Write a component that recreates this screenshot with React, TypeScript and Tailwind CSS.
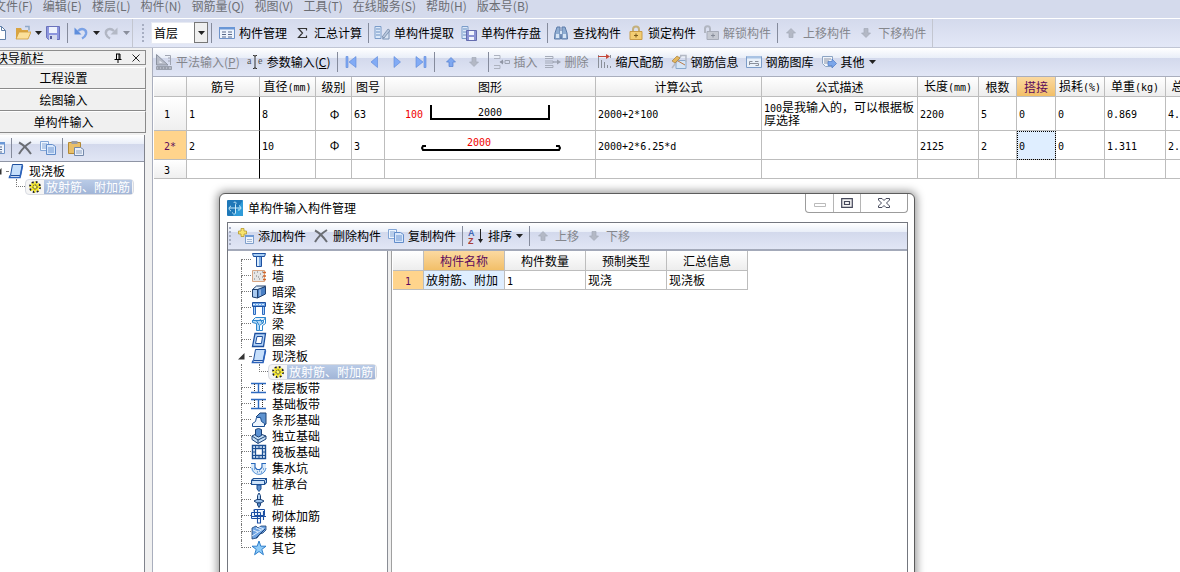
import type { ReactNode } from 'react';
import clsx from 'clsx';

/* ─── Types ─────────────────────────────────────────────────────────────── */

interface RebarRow {
  no: string;
  name: string;
  diameter: string;
  grade: string;
  shape: string;
  drawing: ReactNode;
  formula: string;
  remark: ReactNode;
  length: string;
  count: string;
  lap: string;
  loss: string;
  unitWeight: string;
  totalWeight: string;
  active?: boolean;
  height: string;
}

/* ─── Icons ─────────────────────────────────────────────────────────────── */

function Icon({ children }: { children?: ReactNode }) {
  return (
    <svg viewBox="0 0 16 16" className="w-4 h-4 shrink-0" fill="none" aria-hidden="true">
      {children}
    </svg>
  );
}

function Caret({ light }: { light?: boolean }) {
  return (
    <svg viewBox="0 0 7 4" className={clsx('w-[7px] h-1 shrink-0', light ? 'text-[#8a8f9c]' : 'text-[#222]')} aria-hidden="true">
      <path d="M0 0h7L3.5 4z" fill="currentColor" />
    </svg>
  );
}

const NewIcon = () => (
  <Icon>
    <path d="M2.5 1.5h7l4 4v9h-11z" fill="#fff" stroke="#5f7fa8" />
    <path d="M9.5 1.5v4h4" stroke="#5f7fa8" />
  </Icon>
);

const OpenIcon = () => (
  <Icon>
    <path d="M1 3h5l1 2h6v9H1z" fill="#d9a441" />
    <path d="M10 1.5h4v4" stroke="#8fa9c9" strokeWidth="1.5" />
    <path d="M1 14L4 7h12l-3 7z" fill="#fbe09a" stroke="#d09c3a" strokeWidth=".8" />
  </Icon>
);

const SaveIcon = () => (
  <Icon>
    <path d="M1.5 1.5h13v13h-11l-2-2z" fill="#8c95de" stroke="#6a72bb" />
    <path d="M4 2h8v6H4z" fill="#eef2fd" />
    <path d="M4 10h8v5H4z" fill="#d3d8ee" />
    <path d="M5 11h2v3H5z" fill="#555d9c" />
  </Icon>
);

const UndoIcon = ({ light }: { light?: boolean }) => (
  <Icon>
    <g transform={light ? 'translate(16 0) scale(-1 1)' : undefined}>
      <path d="M5 6c4-4 9-1.500 8 3-.5 2-2 3.500-4 4.500" stroke={light ? '#b1b6c3' : '#7ba2e6'} strokeWidth="2.4" />
      <path d="M1.5 2.500v7h7z" fill={light ? '#b4b9c6' : '#5f8edc'} />
    </g>
  </Icon>
);

const FormIcon = () => (
  <Icon>
    <path d="M.5 2.5h15v11H.5z" fill="#eef4fd" stroke="#6e93c9" />
    <path d="M0 2h16v2.500H0z" fill="#6a97d6" />
    <path d="M3 7h4M3 9.500h4M3 12h4M9 7h4M9 9.500h4M9 12h4" stroke="#58698a" />
  </Icon>
);

const SigmaIcon = () => (
  <Icon>
    <path d="M12.5 5.500v-2H4.500l4 4.500-4 4.500h8v-2" stroke="#333" strokeWidth="1.2" />
  </Icon>
);

const ExtractIcon = () => (
  <Icon>
    <path d="M1 1.500h6v12H1z" fill="#dbe8f8" stroke="#7b9cc9" />
    <path d="M2 4h4M2 7h4M2 10h4" stroke="#6b8fc2" />
    <path d="M8.500 14L15 5v9z" fill="#d9e4f4" stroke="#7a93b5" />
    <path d="M8 12l6-8 2 1.500-6 7.500z" fill="#b9c8df" stroke="#69809f" strokeWidth=".7" />
  </Icon>
);

const StoreIcon = () => (
  <Icon>
    <path d="M1 1.500h6v12H1z" fill="#dbe8f8" stroke="#7b9cc9" />
    <path d="M2 4h4M2 7h4M2 10h4" stroke="#6b8fc2" />
    <path d="M5.500 5.500h10v10h-10z" fill="#8b93d4" stroke="#646cae" />
    <path d="M8 6h5v4H8zM8 12h5v3H8z" fill="#f1f4fd" />
  </Icon>
);

const FindIcon = () => (
  <Icon>
    <path d="M4 2h3v3l.5 9h-6l.5-6zM9 2h3l2 6 .5 6h-6L9 5z" fill="#8fadd2" stroke="#5c7ba8" />
    <path d="M3 9h3v4H3zM10 9h3v4h-3zM7 6h2v3H7z" fill="#d6e4f5" />
  </Icon>
);

const LockIcon = ({ light }: { light?: boolean }) => (
  <Icon>
    <path
      d={light ? 'M2 8V4a2.500 2.500 0 0 1 5-.5V7' : 'M5 7V4.500a3 3 0 0 1 6 0V7'}
      stroke={light ? '#b1b6c1' : '#c4b07c'}
      strokeWidth="2"
    />
    <path
      d={light ? 'M4 6.500h11.500v8H4z' : 'M2 6.500h12v8H2z'}
      fill={light ? '#c5c9d2' : '#f3cd72'}
      stroke={light ? '#a7acb8' : '#c99c48'}
    />
    <path
      d={light ? 'M8 10.500h4M10 8.500v4' : 'M6 10.500h4M8 8.500v4'}
      stroke={light ? '#858b98' : '#7b5a1c'}
    />
  </Icon>
);

const ArrowIcon = ({ down, blue }: { down?: boolean; blue?: boolean }) => (
  <Icon>
    <path
      d={down ? 'M8 12.500L3.500 8H6V3.500h4V8h2.500z' : 'M8 3.500L3.500 8H6v4.500h4V8h2.500z'}
      fill={blue ? '#7ea7f0' : '#b3b8c5'}
      stroke={blue ? '#5580d0' : '#a4aab8'}
      strokeWidth=".7"
    />
  </Icon>
);

const NavIcon = ({ d }: { d: string }) => (
  <Icon>
    <path d={d} fill="#82abf5" stroke="#5a86d8" strokeWidth=".6" />
  </Icon>
);

const RulerIcon = () => (
  <Icon>
    <path d="M.5.5L12 11H.5z" fill="#b7bcc8" stroke="#8c93a1" />
    <path d="M3.500 6.500v2.500h3z" fill="#e6e9f3" />
    <path d="M.5 12.500h15v3H.5z" fill="#b5bac6" stroke="#9aa0ad" />
    <path d="M3 13v2M6 13v2M9 13v2M12 13v2" stroke="#7e8492" />
    <path d="M9 1.500h5.500V11M12 4h2M12 7h2" stroke="#a0a5b2" />
  </Icon>
);

const ParamIcon = () => (
  <svg viewBox="0 0 16 16" className="w-4 h-4 shrink-0" aria-hidden="true">
    <text x="0" y="10" fontSize="10" fill="#555" fontFamily="Liberation Serif, serif">a</text>
    <text x="11" y="10" fontSize="10" fill="#555" fontFamily="Liberation Serif, serif">e</text>
    <path d="M6 1.500h1.500l.5 1 .5-1H10M8 2v12M6 14.500h1.500l.5-1 .5 1H10" stroke="#333" fill="none" />
  </svg>
);

const InsertIcon = () => (
  <Icon>
    <path d="M0 1.500h6v3H0M0 11.500h6v3H0M6 8h4" stroke="#adb2bf" />
    <path d="M5.500 8l3.500-2.500v5z" fill="#9096a5" />
    <path d="M11 6.500h4.500v3H11z" stroke="#9da3b1" />
  </Icon>
);

const RemoveRowIcon = () => (
  <Icon>
    <path d="M0 2.500h8v2H0M0 7h8v2H0M0 11.500h8v2H0" stroke="#a5abb9" />
    <path d="M8 8h6" stroke="#8d93a2" />
    <path d="M16 8l-4-2.500v5z" fill="#9ba1af" />
  </Icon>
);

const ScaleIcon = () => (
  <Icon>
    <path d="M2.500 1v13M5.500 6v8M8.500 8v6M11.500 11v3M14.500 1v3M14.500 12v2" stroke="#8a8f99" />
    <path d="M2 2.500h9" stroke="#c4493b" />
    <path d="M10 0l4 2.500L10 5z" fill="#c4493b" />
  </Icon>
);

const InfoIcon = () => (
  <Icon>
    <path d="M5 6.500h10v8H5z" fill="#d5e5f7" stroke="#8aa9cc" />
    <path d="M1 14l9-12M9 1.500h6V8" stroke="#b3b9c5" strokeWidth="1.5" />
    <path d="M1 7l5-5 3 2-5 5z" fill="#e5b75d" stroke="#9b7434" strokeWidth=".6" />
    <path d="M7 7l7 4" stroke="#bb7a49" />
  </Icon>
);

const LibraryIcon = () => (
  <Icon>
    <path d="M.5 2.500h15v11H.5z" fill="#eaf1fa" stroke="#7c9cc8" />
    <path d="M1 2h14v2.500H1z" fill="#a9c3e4" />
    <path d="M3.500 11V7.500h3M3.500 9.500h9v2h-3M9 7.500h3.500" stroke="#8a909c" />
  </Icon>
);

const OtherIcon = () => (
  <Icon>
    <path d="M1.500 2.500h10v10h-7l-3-3z" fill="#f1f5fb" stroke="#8ca4c3" />
    <path d="M3 5h7M3 7h5M3 9h4" stroke="#8a93a5" />
    <path d="M7 7.500h4V5l4.500 4.500L11 14v-2.500H7z" fill="#7ba6ea" stroke="#4c79c4" strokeWidth=".7" />
  </Icon>
);

const CrossIcon = () => (
  <Icon>
    <path d="M2 2.500c4 2 8.500 6.500 12 11.500M14 2C9 5 5 9 2 14" stroke="#6a6d73" strokeWidth="2" />
  </Icon>
);

const CopyIcon = () => (
  <Icon>
    <path d="M.5 1.500h8v9h-8z" fill="#eef5fe" stroke="#83a6d6" />
    <path d="M2 4h5M2 6h5M2 8h5" stroke="#83a6d6" />
    <path d="M6.500 4.500h6l3 2v8h-9z" fill="#d8e7fb" stroke="#628dca" />
    <path d="M8 8h6M8 10h6M8 12h6" stroke="#6c95d0" />
  </Icon>
);

const PasteIcon = () => (
  <Icon>
    <path d="M.5 2.500h12v11H.5z" fill="#e9bf68" stroke="#b28936" />
    <path d="M3.500 1h6v3h-6z" fill="#9a9da5" />
    <path d="M6.500 7.500h6l3 2v6h-9z" fill="#eaf0fa" stroke="#7489aa" />
    <path d="M8 11h6M8 13h6" stroke="#8ea2c1" />
  </Icon>
);

const AddIcon = () => (
  <Icon>
    <path d="M7.500 7.500h8v8h-8z" fill="#eef4fc" stroke="#7f9fcb" />
    <path d="M7 7h9v2H7z" fill="#6f9ad6" />
    <path d="M9 11.500h5M9 13.500h5" stroke="#a3b6d4" />
    <path d="M3 .5h3V3h2.500v3H6v2.500H3V6H.5V3H3z" fill="#f7e36f" stroke="#b89a29" strokeWidth=".8" />
  </Icon>
);

const SortIcon = () => (
  <svg viewBox="0 0 16 16" className="w-4 h-4 shrink-0" aria-hidden="true">
    <text x="0" y="8" fontSize="9" fontWeight="bold" fill="#3f66b5" fontFamily="Liberation Sans, sans-serif">A</text>
    <text x="0" y="16" fontSize="9" fontWeight="bold" fill="#a93e3a" fontFamily="Liberation Sans, sans-serif">Z</text>
    <path d="M12.500 1v12" stroke="#222" />
    <path d="M10 11h5l-2.500 4z" fill="#222" />
  </svg>
);

/* Component-type icons used by the trees */

const B = '#1d4f9e';
const L = '#a9d0f7';

const SlabIcon = () => (
  <Icon>
    <path d="M4.500 1.500h10l-2 11h-10z" fill="#c6dffb" stroke={B} />
    <path d="M2 12.500l-.5 2H12l2.500-12" stroke="#2b62bb" strokeWidth="1.6" />
  </Icon>
);

const SunIcon = () => (
  <Icon>
    <circle cx="8" cy="8" r="5" stroke="#222" strokeWidth="2" strokeDasharray="2 1.93" />
    <path d="M8 2.500v11M2.500 8h11M4.200 4.200l7.600 7.600M11.800 4.200l-7.600 7.600" stroke="#f6e71c" strokeWidth="1.5" />
    <circle cx="8" cy="8" r="3.500" fill="#f6e71c" />
    <circle cx="8" cy="8" r="2" fill="#fff86b" stroke="#333" strokeDasharray="1.500 .6" />
  </Icon>
);

const ColumnIcon = () => (
  <Icon>
    <path d="M1.500 1.500h13l-1 3h-11z" fill={L} stroke={B} />
    <path d="M5.500 4.500h5v10h-5z" fill="#d9ecfd" stroke={B} />
    <path d="M9 5v9" stroke="#5e97dd" strokeWidth="1.5" />
  </Icon>
);

const WallIcon = () => (
  <Icon>
    <path d="M1.500 2.500h12v11h-12z" fill="#e6e6e6" stroke="#d9a683" />
    <path d="M3 5h1M6 4h1M9 6h1M5 8h1M11 9h1M3 11h1M8 11h1M11 4h1M7 9h1" stroke="#777" />
    <path d="M12 4.500h3M12 8h3M12 11.500h3" stroke="#d2662b" strokeWidth="1.5" />
  </Icon>
);

const HiddenBeamIcon = () => (
  <Icon>
    <path d="M1.500 5.500l4-3.500h9l-5 3.500z" fill="#dcecfb" stroke="#20406f" />
    <path d="M1.500 5.500h5V14l-5-1z" fill="#a9c9ef" stroke="#20406f" />
    <path d="M6.500 5.500l8-3v7.500l-8 4z" fill="#4a7fc4" stroke="#20406f" />
    <path d="M9 5.500V12" stroke="#cfe2f8" />
  </Icon>
);

const CouplingBeamIcon = () => (
  <Icon>
    <path d="M1.500 2.500h13v4h-13z" fill="#6aa2e4" stroke={B} />
    <path d="M2 4.500h12" stroke="#dbeafb" strokeDasharray="2 1" />
    <path d="M2.500 7v7.500h2V7M11.500 7v7.500h2V7" fill={L} stroke="#2d6ac0" />
  </Icon>
);

const BeamIcon = () => (
  <Icon>
    <path d="M1.500 4.500l3-3h10l-2 3z" fill="#e4f1fd" stroke="#2c85cc" />
    <path d="M1.500 4.500h11v2l-4 3v5h-3v-7l-4-1z" fill="#b5daf6" stroke="#2c85cc" />
    <path d="M14.500 1.500v6l-3 2v5h-3M5 4l3 5M9 3l3 5" stroke="#2c85cc" />
  </Icon>
);

const RingBeamIcon = () => (
  <Icon>
    <path d="M4 1.500h10.500l-2 13h-11z" fill="#b4d4f8" stroke={B} strokeWidth="1.3" />
    <path d="M6 4.500h5.500l-1 7h-6z" fill="#fff" stroke={B} />
  </Icon>
);

const StripIcon = () => (
  <Icon>
    <path d="M0 3.500h15M0 12.500h15M7.500 4v8" stroke="#2d6ac0" strokeWidth="1.4" />
    <path d="M3.500 4v8M11.500 4v8" stroke="#333" strokeDasharray="1 1" />
  </Icon>
);

const StripFootingIcon = () => (
  <Icon>
    <path d="M5 5l4-4h6v11l-3 2" fill="#5f93cf" stroke="#1c4277" />
    <path d="M1.500 14.500v-3l3-2 1-4h4l1 4 3 2v3z" fill="#eef6fe" stroke="#1c4f93" />
  </Icon>
);

const PadFootingIcon = () => (
  <Icon>
    <path d="M1 8l6-3 8 3v3l-8 4.500-6-4z" fill="#c5dff6" stroke="#1c4277" />
    <path d="M1 8l6 4 8-4M7 12v3" stroke="#1c4277" />
    <path d="M4.500 1.500l3-1 3 1v6l-3 1.500-3-1.500z" fill="#5a90d2" stroke="#1c4277" />
  </Icon>
);

const RaftIcon = () => (
  <Icon>
    <path d="M1.500 1.500h13v13h-13z" fill="#dcebfa" stroke="#1c4f93" strokeWidth="1.4" />
    <path d="M4.500 4.500h7v7h-7z" fill="#fff" stroke="#1c4f93" strokeWidth="1.3" />
    <path d="M4.500 2v2M8 2v2M11.500 2v2M4.500 12v2M8 12v2M11.500 12v2M2 4.500h2M2 8h2M2 11.500h2M12 4.500h2M12 8h2M12 11.500h2" stroke="#1c4f93" />
  </Icon>
);

const PitIcon = () => (
  <Icon>
    <path d="M0 3.500h4v4l2 2h4l2-2v-4h3V9c0 7-14 7-15 0z" fill="#d9eafa" />
    <path d="M0 3.500h4v4l2 2h3l2-2v-4h4" stroke="#2968bb" strokeWidth="1.2" />
    <path d="M1 8c1 8 12 9 14 0" stroke="#4a8ad3" />
    <path d="M3 9h1M6 12h1M10 12h1M12 9h1M8 11h1" stroke="#2968bb" />
  </Icon>
);

const PileCapIcon = () => (
  <Icon>
    <path d="M.5 4.500l2-2h13v4l-2 2H.5z" fill="#cfe4fa" stroke="#1c4f93" strokeWidth="1.2" />
    <path d="M.5 4.500h13l2-2M13.500 5v3" stroke="#1c4f93" />
    <path d="M6 9h4v4l-2 2.500L6 13z" fill="#5a8fcd" stroke="#1c4f93" />
  </Icon>
);

const PileIcon = () => (
  <Icon>
    <path d="M6.500 3.500L8 1l1.500 2.500V8h-3z" fill="#b3d2f4" stroke="#1c4277" />
    <path d="M3 9l3-1.500h4L13 9l-3 2H6z" fill="#9cc3ed" stroke="#1c4277" />
    <path d="M6.500 11h3v2L8 15.500 6.500 13z" fill="#5a8fcd" stroke="#1c4277" />
  </Icon>
);

const MasonryIcon = () => (
  <Icon>
    <path d="M3.500 1.500h10v6h-10zM.5 4.500h9v6h-9z" fill="#e4f0fc" fillOpacity=".6" stroke="#1c4fa3" />
    <path d="M6.500 2v13h3V6M0 8.500h15M12.500 3v9M3 1.500v2" stroke="#1c4fa3" strokeWidth="1.1" />
  </Icon>
);

const StairIcon = () => (
  <Icon>
    <path d="M1 7V4l4-2 2 2 3-2h5v4l-3 3-3 1-3 4-5 1v-3z" fill="#6ea3e2" stroke="#1c4277" strokeWidth=".8" />
    <path d="M2 6l5 2M5 4l5 2M8 3l5 2M1 12l11-7" stroke="#dcebfb" />
    <path d="M5 14l9-9" stroke="#1c4277" />
  </Icon>
);

const StarIcon = () => (
  <Icon>
    <path d="M8 1l1.800 5.200H15l-4.200 3.200 1.600 5.300L8 11.500l-4.400 3.200 1.600-5.300L1 6.200h5.200z" fill="#8ecbf8" stroke="#2f7fcb" />
  </Icon>
);

/* ─── Small building blocks ─────────────────────────────────────────────── */

/* Half-width characters take exactly half the width of a Chinese one */
function Half({ children }: { children: ReactNode }) {
  return (
    <span className="font-['DejaVu_Sans_Mono',monospace] text-[10px] leading-none whitespace-pre">{children}</span>
  );
}

function Sep() {
  return <span className="w-px h-5 mx-0.5 bg-[#858b9c] shrink-0" />;
}

function Grip() {
  return (
    <span className="flex flex-col gap-0.5 w-[3px] shrink-0">
      {[0, 1, 2, 3, 4].map(n => (
        <span key={n} className="w-0.5 h-0.5 bg-[#a7aec2]" />
      ))}
    </span>
  );
}

function ToolButton({
  icon, children, label, disabled, caret,
}: {
  icon: ReactNode;
  children?: ReactNode;
  label?: string;
  disabled?: boolean;
  caret?: boolean;
}) {
  return (
    <button
      type="button"
      aria-label={label}
      disabled={disabled}
      className={clsx(
        'flex items-center gap-1 pl-[3px] h-6 shrink-0 whitespace-nowrap',
        caret && !children ? 'pr-0' : 'pr-1',
        disabled ? 'text-[#85878d]' : 'text-black'
      )}
    >
      {icon}
      {children && <span>{children}</span>}
      {caret && <Caret light={disabled} />}
    </button>
  );
}

/* ─── Tree ──────────────────────────────────────────────────────────────── */

interface TreeNode {
  label: string;
  icon: ReactNode;
  child?: string;
}

const COMPONENT_TREE: TreeNode[] = [
  { label: '柱',       icon: <ColumnIcon /> },
  { label: '墙',       icon: <WallIcon /> },
  { label: '暗梁',     icon: <HiddenBeamIcon /> },
  { label: '连梁',     icon: <CouplingBeamIcon /> },
  { label: '梁',       icon: <BeamIcon /> },
  { label: '圈梁',     icon: <RingBeamIcon /> },
  { label: '现浇板',   icon: <SlabIcon />, child: '放射筋、附加筋' },
  { label: '楼层板带', icon: <StripIcon /> },
  { label: '基础板带', icon: <StripIcon /> },
  { label: '条形基础', icon: <StripFootingIcon /> },
  { label: '独立基础', icon: <PadFootingIcon /> },
  { label: '筏板基础', icon: <RaftIcon /> },
  { label: '集水坑',   icon: <PitIcon /> },
  { label: '桩承台',   icon: <PileCapIcon /> },
  { label: '桩',       icon: <PileIcon /> },
  { label: '砌体加筋', icon: <MasonryIcon /> },
  { label: '楼梯',     icon: <StairIcon /> },
  { label: '其它',     icon: <StarIcon /> },
];

function Tree({ nodes }: { nodes: TreeNode[] }) {
  return (
    <ul className="text-xs leading-4">
      {nodes.map((node, i) => {
        const first = i === 0;
        const last = i === nodes.length - 1;
        return (
          <li key={node.label}>
            <div className="flex items-center h-4">
              {node.child ? (
                <span className="flex items-center w-[13px] h-4 -ml-[3px] shrink-0">
                  <svg viewBox="0 0 7 7" className="w-[7px] h-[7px]" aria-hidden="true">
                    <path d="M6.500 0v6.500H0z" fill="#333" />
                  </svg>
                  <span className="ml-1 flex-1 border-b border-dotted border-[#777]" />
                </span>
              ) : (
                <span className="flex flex-col w-2.5 h-4 shrink-0">
                  <span className={clsx('h-2 border-b border-dotted border-[#777]', !first && 'border-l')} />
                  <span className={clsx('h-2 border-dotted border-[#777]', !last && 'border-l')} />
                </span>
              )}
              {node.icon}
              <button type="button" className="ml-[5px] whitespace-nowrap">{node.label}</button>
            </div>

            {node.child && (
              <div className="flex items-center h-4">
                <span className={clsx('w-[18px] h-4 shrink-0 border-dotted border-[#777]', !last && 'border-l')} />
                <span className="w-[9px] h-2 self-start shrink-0 border-l border-b border-dotted border-[#777]" />
                <button
                  type="button"
                  className="flex items-center h-4 px-px bg-[#f5f5f5] border border-[#d8dbe2] rounded-sm whitespace-nowrap"
                >
                  <SunIcon />
                  <span className="ml-px px-0.5 h-[14px] leading-[14px] text-white bg-linear-to-b from-[#b9cbe7] to-[#a1b5d7]">
                    {node.child}
                  </span>
                </button>
              </div>
            )}
          </li>
        );
      })}
    </ul>
  );
}

/* ─── Menu and toolbars ─────────────────────────────────────────────────── */

const MENUS = ['文件(F)', '编辑(E)', '楼层(L)', '构件(N)', '钢筋量(Q)', '视图(V)', '工具(T)', '在线服务(S)', '帮助(H)', '版本号(B)'];

function MenuBar() {
  return (
    <nav className="flex items-start gap-[10px] h-[18px] pl-3 bg-[#d4daec] text-[#6c6e74]">
      {MENUS.map(m => (
        <button key={m} type="button" className="leading-3 whitespace-nowrap">{m}</button>
      ))}
    </nav>
  );
}

function MainToolbar() {
  return (
    <div className="flex h-[30px] bg-linear-to-b from-[#d4daec] to-[#e3e8f7] border-t border-b border-t-white border-b-[#c0c5d4]">
      <div className="flex items-center pl-[7px] pr-0.5 border-r border-[#c3c6d0]">
        <ToolButton icon={<NewIcon />} label="新建" />
        <ToolButton icon={<OpenIcon />} label="打开" caret />
        <ToolButton icon={<SaveIcon />} label="保存" />
        <Sep />
        <ToolButton icon={<UndoIcon />} label="撤销" caret />
        <ToolButton icon={<UndoIcon light />} label="恢复" caret disabled />
      </div>

      <div className="flex items-center pl-[9px] pr-0.5 border-r border-[#c3c6d0]">
        <Grip />
        <div className="relative ml-1.5 mr-px">
          <select
            aria-label="楼层"
            className="appearance-none w-[57px] h-[22px] pl-0.5 text-xs bg-white border border-[#e7eaf3] text-black rounded-none"
          >
            <option>首层</option>
          </select>
          <span className="absolute right-0 top-0 w-[14px] h-[21px] flex items-center justify-center bg-[#efefef] border border-[#777] pointer-events-none">
            <Caret />
          </span>
        </div>
        <Sep />
        <span className="w-0.5 shrink-0" />
        <ToolButton icon={<FormIcon />}>构件管理</ToolButton>
        <ToolButton icon={<SigmaIcon />}>汇总计算</ToolButton>
        <Sep />
        <ToolButton icon={<ExtractIcon />}>单构件提取</ToolButton>
        <ToolButton icon={<StoreIcon />}>单构件存盘</ToolButton>
        <Sep />
        <ToolButton icon={<FindIcon />}>查找构件</ToolButton>
        <ToolButton icon={<LockIcon />}>锁定构件</ToolButton>
        <ToolButton icon={<LockIcon light />} disabled>解锁构件</ToolButton>
        <Sep />
        <ToolButton icon={<ArrowIcon />} disabled>上移构件</ToolButton>
        <ToolButton icon={<ArrowIcon down />} disabled>下移构件</ToolButton>
      </div>
    </div>
  );
}

function GridToolbar() {
  return (
    <div className="flex items-center h-[29px] border-b border-[#a9aebd] bg-[linear-gradient(to_bottom,#ffffff_0%,#e9eef8_35%,#d3d9ec_36%,#e1e6f5_100%)]">
      <ToolButton icon={<RulerIcon />} disabled>平法输入(<u>P</u>)</ToolButton>
      <ToolButton icon={<ParamIcon />}>参数输入(<u>C</u>)</ToolButton>
      <Sep />
      <ToolButton icon={<NavIcon d="M3 2.500h2v11H3zM13 2.500v11L6 8z" />} label="首行" />
      <ToolButton icon={<NavIcon d="M11.500 2.500v11L5 8z" />} label="上一行" />
      <ToolButton icon={<NavIcon d="M5 2.500v11L11.500 8z" />} label="下一行" />
      <ToolButton icon={<NavIcon d="M12 2.500h2v11h-2zM4 2.500v11L11 8z" />} label="末行" />
      <Sep />
      <span className="w-[3px] shrink-0" />
      <ToolButton icon={<ArrowIcon blue />} label="上移" />
      <ToolButton icon={<ArrowIcon down />} label="下移" disabled />
      <Sep />
      <ToolButton icon={<InsertIcon />} disabled>插入</ToolButton>
      <ToolButton icon={<RemoveRowIcon />} disabled>删除</ToolButton>
      <ToolButton icon={<ScaleIcon />}>缩尺配筋</ToolButton>
      <ToolButton icon={<InfoIcon />}>钢筋信息</ToolButton>
      <ToolButton icon={<LibraryIcon />}>钢筋图库</ToolButton>
      <ToolButton icon={<OtherIcon />} caret>其他</ToolButton>
    </div>
  );
}

/* ─── Rebar grid ────────────────────────────────────────────────────────── */

const ROWS: RebarRow[] = [
  {
    no: '1 ', name: '1', diameter: '8', grade: 'Φ', shape: '63',
    drawing: (
      <svg viewBox="0 0 210 33" className="w-[210px] h-[33px] font-['DejaVu_Sans_Mono',monospace] text-[10px]">
        <path d="M46 8v14h118V8" fill="none" stroke="#000" strokeWidth="2" />
        <text x="20" y="21" fill="#f00000">100</text>
        <text x="93" y="19" fill="#000">2000</text>
      </svg>
    ),
    formula: '2000+2*100',
    remark: <><Half>100</Half>是我输入的，可以根据板厚选择</>,
    length: '2200', count: '5', lap: '0', loss: '0', unitWeight: '0.869', totalWeight: '4.345',
    height: 'h-[34px]',
  },
  {
    no: '2*', name: '2', diameter: '10', grade: 'Φ', shape: '3',
    drawing: (
      <svg viewBox="0 0 210 28" className="w-[210px] h-7 font-['DejaVu_Sans_Mono',monospace] text-[10px]">
        <path d="M41 15h-3l-1 2 1 2h136l1-2-1-2h-3" fill="none" stroke="#000" strokeWidth="2" />
        <text x="82" y="15" fill="#f00000">2000</text>
      </svg>
    ),
    formula: '2000+2*6.25*d',
    remark: '',
    length: '2125', count: '2', lap: '0', loss: '0', unitWeight: '1.311', totalWeight: '2.622',
    active: true,
    height: 'h-[29px]',
  },
  {
    no: '3 ', name: '', diameter: '', grade: '', shape: '', drawing: null, formula: '', remark: '',
    length: '', count: '', lap: '', loss: '', unitWeight: '', totalWeight: '',
    height: 'h-[19px]',
  },
];

const HEADERS: { label: string; unit?: string; active?: boolean }[] = [
  { label: '筋号' },
  { label: '直径', unit: '(mm)' },
  { label: '级别' },
  { label: '图号' },
  { label: '图形' },
  { label: '计算公式' },
  { label: '公式描述' },
  { label: '长度', unit: '(mm)' },
  { label: '根数' },
  { label: '搭接', active: true },
  { label: '损耗', unit: '(%)' },
  { label: '单重', unit: '(kg)' },
  { label: '总重', unit: '(kg)' },
];

const HEAD_CELL = 'h-5 p-0 font-normal whitespace-nowrap border-r border-b border-[#bdbdbd]';
const HEAD_PLAIN = 'bg-linear-to-b from-white to-[#ededed]';
const HEAD_ACTIVE = 'bg-linear-to-b from-[#fbd9a0] to-[#f2bf68] text-[#5c0a5c]';
const CELL = 'p-0 pl-0.5 border-r border-b border-[#bdbdbd] leading-3';

function RebarGrid() {
  return (
    <table className="table-fixed border-separate border-spacing-0 w-[1072px] text-xs leading-3">
      <colgroup>
        <col className="w-[33px]" />
        <col className="w-[73px]" />
        <col className="w-[56px]" />
        <col className="w-[36px]" />
        <col className="w-[33px]" />
        <col className="w-[211px]" />
        <col className="w-[166px]" />
        <col className="w-[156px]" />
        <col className="w-[61px]" />
        <col className="w-[38px]" />
        <col className="w-[39px]" />
        <col className="w-[49px]" />
        <col className="w-[61px]" />
        <col className="w-[60px]" />
      </colgroup>
      <thead>
        <tr>
          <th className={clsx(HEAD_CELL, HEAD_PLAIN)} />
          {HEADERS.map(h => (
            <th key={h.label} className={clsx(HEAD_CELL, h.active ? HEAD_ACTIVE : HEAD_PLAIN)}>
              {h.label}{h.unit && <Half>{h.unit}</Half>}
            </th>
          ))}
        </tr>
      </thead>
      <tbody>
        {ROWS.map(row => (
          <tr key={row.no} className={row.height}>
            <th
              className={clsx(
                'p-0 font-normal border-r border-b border-[#bdbdbd]',
                row.active ? 'bg-[#ffd48c] text-[#5c0a5c]' : 'bg-linear-to-b from-white to-[#efefef]'
              )}
            >
              <Half>{row.no}</Half>
            </th>
            <td className="p-0 pl-0.5 border-r border-b border-b-[#bdbdbd] border-r-black"><Half>{row.name}</Half></td>
            <td className={CELL}><Half>{row.diameter}</Half></td>
            <td className={clsx(CELL, 'text-center')}>{row.grade}</td>
            <td className={CELL}><Half>{row.shape}</Half></td>
            <td className="p-0 border-r border-b border-[#bdbdbd] align-top">{row.drawing}</td>
            <td className={CELL}><Half>{row.formula}</Half></td>
            <td className={CELL}>{row.remark}</td>
            <td className={CELL}><Half>{row.length}</Half></td>
            <td className={CELL}><Half>{row.count}</Half></td>
            <td className={clsx(CELL, row.active && 'bg-[#dfeeff] outline-1 outline-dotted outline-black -outline-offset-1')}>
              <Half>{row.lap}</Half>
            </td>
            <td className={CELL}><Half>{row.loss}</Half></td>
            <td className={CELL}><Half>{row.unitWeight}</Half></td>
            <td className={CELL}><Half>{row.totalWeight}</Half></td>
          </tr>
        ))}
      </tbody>
    </table>
  );
}

/* ─── Sidebar ───────────────────────────────────────────────────────────── */

function Sidebar() {
  return (
    <aside className="flex flex-col w-[164px] shrink-0 bg-[#f0f0f0]">
      <div className="flex items-center h-[15px] mt-0.5 pl-px pr-1 border border-[#8d8d8d]">
        <span className="leading-3 whitespace-nowrap">模块导航栏</span>
        <button type="button" aria-label="固定" className="ml-auto">
          <svg viewBox="0 0 10 10" className="w-2.5 h-2.5" aria-hidden="true">
            <path d="M3 1h4M3.500 1v5M6 1v5M7 1v5M1.500 6.500h7M5 7v3" fill="none" stroke="#000" />
          </svg>
        </button>
        <button type="button" aria-label="关闭" className="ml-2">
          <svg viewBox="0 0 10 10" className="w-2.5 h-2.5" aria-hidden="true">
            <path d="M1.500 1.500l7 7M8.500 1.500l-7 7" fill="none" stroke="#222" />
          </svg>
        </button>
      </div>

      <div className="flex flex-col mt-0.5">
        {['工程设置', '绘图输入', '单构件输入'].map(t => (
          <button
            key={t}
            type="button"
            className="h-[22px] leading-5 bg-[#f0f0f0] border-t border-t-white border-b border-r border-[#8a8a8a]"
          >
            {t}
          </button>
        ))}
      </div>

      <div className="flex flex-col flex-1 mr-px mt-0.5 border-r border-[#80838c] bg-white">
        <div className="flex items-center h-[27px] pl-1 border-b border-[#8f95a5] bg-[linear-gradient(to_bottom,#ffffff_0%,#e9eef8_35%,#d3d9ec_36%,#e1e6f5_100%)]">
          <ToolButton icon={<FormIcon />} label="构件列表" />
          <Sep />
          <ToolButton icon={<CrossIcon />} label="删除" />
          <ToolButton icon={<CopyIcon />} label="复制" />
          <Sep />
          <ToolButton icon={<PasteIcon />} label="粘贴" />
        </div>
        <div className="pl-4 pt-px">
          <Tree nodes={[{ label: '现浇板', icon: <SlabIcon />, child: '放射筋、附加筋' }]} />
        </div>
      </div>
    </aside>
  );
}

/* ─── Component manager window ──────────────────────────────────────────── */

function ComponentTable() {
  const heads = ['构件名称', '构件数量', '预制类型', '汇总信息'];
  return (
    <table className="table-fixed border-separate border-spacing-0 w-[355px] text-xs leading-3">
      <colgroup>
        <col className="w-[31px]" />
        <col className="w-[81px]" />
        <col className="w-[81px]" />
        <col className="w-[81px]" />
        <col className="w-[81px]" />
      </colgroup>
      <thead>
        <tr>
          <th className={clsx(HEAD_CELL, HEAD_PLAIN)} />
          {heads.map((h, i) => (
            <th key={h} className={clsx(HEAD_CELL, i === 0 ? HEAD_ACTIVE : HEAD_PLAIN)}>{h}</th>
          ))}
        </tr>
      </thead>
      <tbody>
        <tr className="h-[19px]">
          <th className="p-0 font-normal border-r border-b border-[#bdbdbd] bg-[#ffd48c] text-[#5c0a5c]">
            <Half>1</Half>
          </th>
          <td className={clsx(CELL, 'bg-[#dfeeff] whitespace-nowrap')}>放射筋、附加</td>
          <td className={CELL}><Half>1</Half></td>
          <td className={CELL}>现浇</td>
          <td className={CELL}>现浇板</td>
        </tr>
      </tbody>
    </table>
  );
}

function ManagerWindow() {
  return (
    <section
      aria-label="单构件输入构件管理"
      className="absolute left-[219px] top-[193px] -bottom-4 w-[696px] flex flex-col bg-white border border-[#5c5c5c] rounded-md shadow-[0_0_8px_2px_rgba(0,0,0,0.4)]"
    >
      <header className="flex items-start h-7 pl-[7px] pr-1.5">
        <svg viewBox="0 0 16 16" className="w-4 h-4 mt-1.5 shrink-0" aria-hidden="true">
          <rect width="16" height="16" rx="1" fill="#1e78b8" />
          <path d="M16 0v16H6z" fill="#2f9bd8" />
          <path d="M6.500 3C8 1 10 2.500 8.500 4.500V13c0 1.500-3 1.500-3-.5M2 8h12M4 6c-2.500 1-2.500 4 0 5M12 5.500c3 1.500 2 5-1 4.500" fill="none" stroke="#c9ecfb" />
        </svg>
        <h2 className="ml-[5px] mt-[5px] leading-[18px]">单构件输入构件管理</h2>
        <div className="ml-auto flex h-[19px] border border-t-0 border-[#9c9c9c] rounded-b divide-x divide-[#b5b5b5]">
          <button type="button" aria-label="最小化" className="w-7 flex items-center justify-center" disabled>
            <svg viewBox="0 0 12 10" className="w-3 h-2.5"><path d="M.5 5.500h11v3H.5z" fill="#fff" stroke="#bbb" /></svg>
          </button>
          <button type="button" aria-label="最大化" className="w-[27px] flex items-center justify-center">
            <svg viewBox="0 0 12 10" className="w-3 h-2.5"><path d="M.7.7h10.600v8.600H.7zM3.500 3.500h5v3h-5z" fill="#f4f4f4" stroke="#45485a" strokeWidth="1.2" /></svg>
          </button>
          <button type="button" aria-label="关闭" className="w-[46px] flex items-center justify-center">
            <svg viewBox="0 0 12 10" className="w-3 h-2.5">
              <path d="M.5.5H4l2 2 2-2h3.500V2l-3 3 3 3v1.500H8l-2-2-2 2H.5V8l3-3-3-3z" fill="#fff" stroke="#45485a" />
            </svg>
          </button>
        </div>
      </header>

      <div className="flex flex-col flex-1 min-h-0 ml-[7px] mr-1.5 border border-b-0 border-[#74777f]">
        <div className="flex items-center h-[28px] pl-px border-b-2 border-[#a3a9b9] bg-[linear-gradient(to_bottom,#ffffff_0%,#e9eef8_35%,#d3d9ec_36%,#e1e6f5_100%)]">
          <Grip />
          <span className="w-[3px] shrink-0" />
          <ToolButton icon={<AddIcon />}>添加构件</ToolButton>
          <ToolButton icon={<CrossIcon />}>删除构件</ToolButton>
          <ToolButton icon={<CopyIcon />}>复制构件</ToolButton>
          <Sep />
          <ToolButton icon={<SortIcon />} caret>排序</ToolButton>
          <Sep />
          <ToolButton icon={<ArrowIcon />} disabled>上移</ToolButton>
          <ToolButton icon={<ArrowIcon down />} disabled>下移</ToolButton>
        </div>
        <div className="flex flex-1 min-h-0">
          <div className="w-[160px] pl-[13px] pt-px shrink-0 border-r border-[#8a8d95]">
            <Tree nodes={COMPONENT_TREE} />
          </div>
          <div className="w-1 shrink-0 bg-[#efefef] border-r border-[#a0a0a0]" />
          <div className="flex-1 pl-px">
            <ComponentTable />
          </div>
        </div>
      </div>
    </section>
  );
}

/* ─── Page ──────────────────────────────────────────────────────────────── */

export default function App() {
  return (
    <div className="relative h-screen overflow-hidden bg-[#f0f0f0] font-['Noto_Sans_CJK_SC',sans-serif] text-xs leading-4 text-black">
      <div className="flex flex-col h-full -ml-[18px]">
        <MenuBar />
        <MainToolbar />
        <div className="flex flex-1 min-h-0">
          <Sidebar />
          <main className="flex-1 min-w-0 ml-1.5 overflow-hidden bg-white border-l border-[#a9aebd]">
            <GridToolbar />
            <div className="overflow-hidden pl-px">
              <RebarGrid />
            </div>
          </main>
        </div>
      </div>
      <ManagerWindow />
    </div>
  );
}
